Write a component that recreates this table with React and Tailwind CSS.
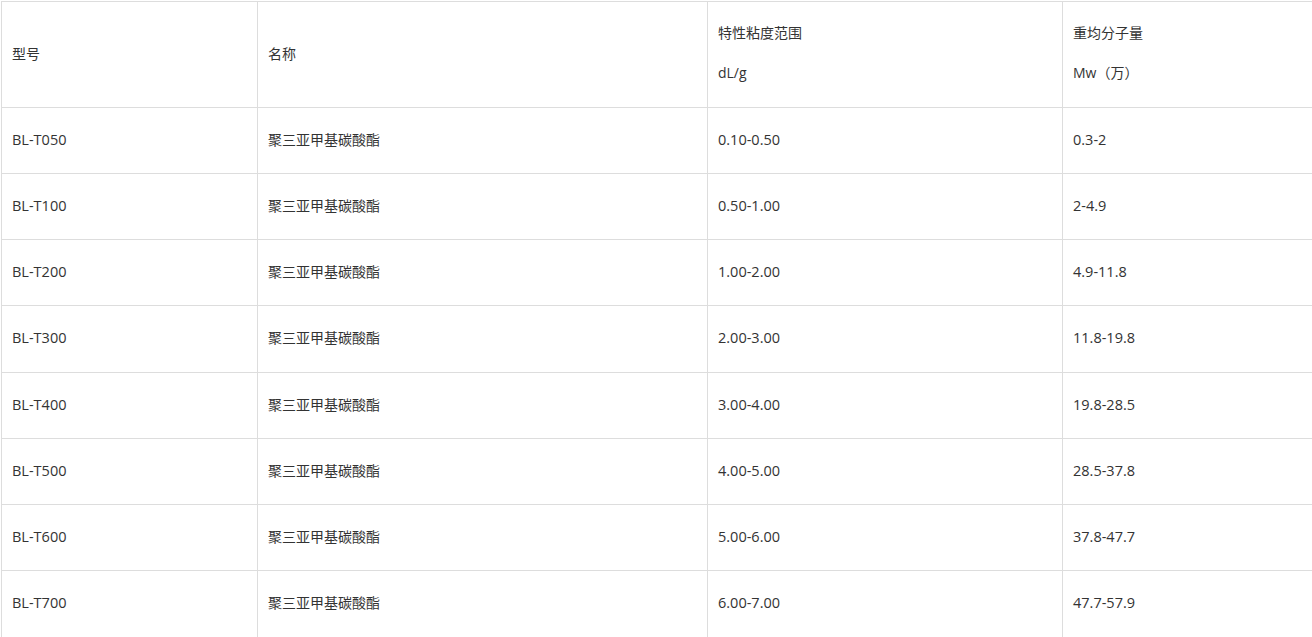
import React from 'react';

const rows = [
  ['BL-T050', '0.10-0.50', '0.3-2'],
  ['BL-T100', '0.50-1.00', '2-4.9'],
  ['BL-T200', '1.00-2.00', '4.9-11.8'],
  ['BL-T300', '2.00-3.00', '11.8-19.8'],
  ['BL-T400', '3.00-4.00', '19.8-28.5'],
  ['BL-T500', '4.00-5.00', '28.5-37.8'],
  ['BL-T600', '5.00-6.00', '37.8-47.7'],
  ['BL-T700', '6.00-7.00', '47.7-57.9'],
];

const cell = 'border border-[#dddddd] px-[10px] align-top text-left font-normal';

export default function App() {
  return (
    <div className="w-[1312px] h-[637px] overflow-hidden bg-white pt-px pl-px text-[14px] text-[#333333]"
      style={{ fontFamily: '"Open Sans", "Noto Sans CJK SC", sans-serif' }}>
      <table className="border-collapse table-fixed w-[1360px]">
        <colgroup>
          <col className="w-[256px]" />
          <col className="w-[450px]" />
          <col className="w-[355px]" />
          <col className="w-[299px]" />
        </colgroup>
        <thead>
          <tr className="h-[106px]">
            <th className={cell + ' !align-middle pb-[3px]'}>型号</th>
            <th className={cell + ' !align-middle pb-[3px]'}>名称</th>
            <th className={cell + ' !align-middle pb-[3px]'}>
              <div className="flex flex-col gap-[20px] leading-[20px]">
                <span>特性粘度范围</span>
                <span>dL/g</span>
              </div>
            </th>
            <th className={cell + ' !align-middle pb-[3px]'}>
              <div className="flex flex-col gap-[20px] leading-[20px]">
                <span>重均分子量</span>
                <span>Mw（万）</span>
              </div>
            </th>
          </tr>
        </thead>
        <tbody>
          {rows.map(([model, visc, mw], i) => (
            <tr key={model} className={i === rows.length - 1 ? 'h-[70px]' : 'h-[66.15px]'}>
              <td className={cell + ' pt-[21px] text-[14.5px]'}>{model}</td>
              <td className={cell + ' pt-[21px]'}>聚三亚甲基碳酸酯</td>
              <td className={cell + ' pt-[21px] text-[14.5px]'}>{visc}</td>
              <td className={cell + ' pt-[21px] text-[14.5px]'}>{mw}</td>
            </tr>
          ))}
        </tbody>
      </table>
    </div>
  );
}
